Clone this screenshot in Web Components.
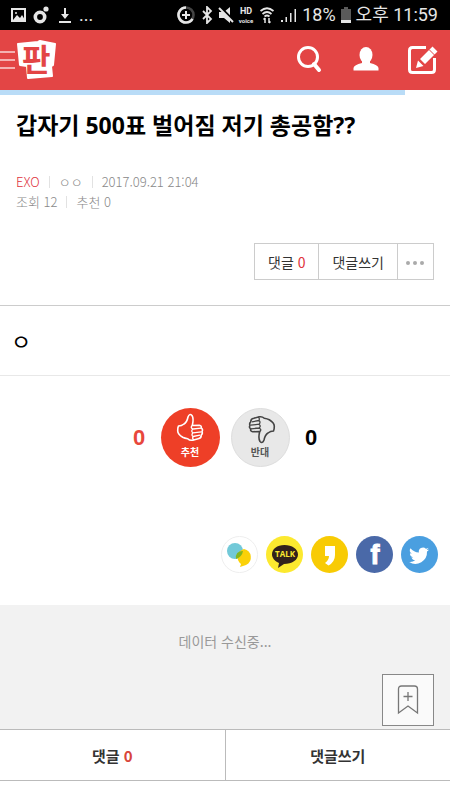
<!DOCTYPE html>
<html lang="ko">
<head>
<meta charset="utf-8">
<meta name="viewport" content="width=device-width, initial-scale=1">
<title>갑자기 500표 벌어짐 저기 총공함??</title>
<style>
    body {
        margin: 0;
        background: #fff;
        color: #333;
        font-family: "Noto Sans CJK KR", "Noto Sans", sans-serif;
        font-size: 14px;
    }
</style>
</head>
<body>
<status-bar>
    <span slot="battery">18%</span>
    <span slot="clock">오후 11:59</span>
</status-bar>
<app-header></app-header>
<load-progress></load-progress>
<main>
    <post-head>
        <span slot="title">갑자기 500표 벌어짐 저기 총공함??</span>
        <a slot="board" href="#exo">EXO</a>
        <span slot="writer">ㅇㅇ</span>
        <span slot="date">2017.09.21 21:04</span>
        <span slot="views">조회 12</span>
        <span slot="likes">추천 0</span>
    </post-head>
    <post-body>ㅇ</post-body>
    <vote-panel up="0" down="0"></vote-panel>
    <share-bar></share-bar>
    <loading-area>데이터 수신중...</loading-area>
</main>
<comment-bar count="0"></comment-bar>

<script>
const define = (name, html, setup) => {
    const template = document.createElement('template');
    template.innerHTML = html;

    customElements.define(name, class extends HTMLElement {
        constructor() {
            super();
            this.attachShadow({ mode: 'open' });
            this.shadowRoot.appendChild(template.content.cloneNode(true));
        }

        connectedCallback() {
            if (setup) setup(this, this.shadowRoot);
        }
    });
};

define('status-bar', `
    <style>
        :host {
            display: flex;
            align-items: center;
            justify-content: space-between;
            height: 30px;
            padding: 0 12px 0 11px;
            background: #000;
            color: #e6e6e6;
            font-family: Roboto, "Noto Sans CJK KR", sans-serif;
            font-size: 18px;
            line-height: 30px;
            white-space: nowrap;
        }

        .group {
            display: flex;
            align-items: center;
            gap: 7px;
        }

        .group.right {
            gap: 5px;
        }

        svg {
            display: block;
            flex: none;
        }

        .hd {
            display: flex;
            flex-direction: column;
            align-items: center;
            font-size: 9px;
            font-weight: 700;
            line-height: 11px;
        }

        .hd small {
            font-size: 6px;
            line-height: 8px;
        }
    </style>
    <div class="group">
        <svg width="15" height="18" viewBox="0 0 15 18"><rect x="1" y="3" width="13" height="12" fill="none" stroke="#e6e6e6" stroke-width="2"/><path d="M2 14l4-5 3 3 2-3 3 5z" fill="#e6e6e6"/><circle cx="5" cy="7" r="1" fill="#e6e6e6"/></svg>
        <svg width="16" height="20" viewBox="0 0 16 20"><circle cx="7" cy="12" r="4.7" fill="none" stroke="#e6e6e6" stroke-width="3.6"/><circle cx="13" cy="4" r="2.6" fill="#e6e6e6"/></svg>
        <svg width="16" height="18" viewBox="0 0 16 18" fill="#e6e6e6"><path d="M8 2h2v6h3l-4 5-4-5h3zM3 15h12v2H3z"/></svg>
        <span>...</span>
    </div>
    <div class="group right">
        <svg width="20" height="20" viewBox="0 0 20 20" fill="none" stroke-width="2.6"><circle cx="10" cy="10" r="7.500" stroke="#444"/><path d="M10 2.500a7.500 7.500 0 1 0 6.500 11.300" stroke="#e6e6e6"/><path d="M10 6v8M6 10h8" stroke="#e6e6e6" stroke-width="2"/></svg>
        <svg width="12" height="18" viewBox="0 0 12 18" fill="none" stroke="#e6e6e6" stroke-width="1.8"><path d="M2 5l8 8-4 4V1l4 4-8 8"/></svg>
        <svg width="16" height="18" viewBox="0 0 16 18"><path d="M1 6h5l6-5v16l-6-5H1z" fill="#e6e6e6"/><path d="M2 1l14 14" stroke="#000" stroke-width="2.500"/><path d="M1 2l14 14" stroke="#e6e6e6" stroke-width="2"/></svg>
        <span class="hd"><span>HD</span><small>voice</small></span>
        <svg width="18" height="18" viewBox="0 0 18 18" fill="none" stroke="#e6e6e6" stroke-width="1.7"><path d="M2.500 5q6.500-5.500 13 0M4.500 8q4.500-4 9 0M6.500 10.500q2.500-2 5 0"/><path d="M7 12v5M5.500 13.500L7 12M11 12v5M12.500 15.500L11 17" stroke-width="1.500"/></svg>
        <svg width="16" height="18" viewBox="0 0 16 18" fill="#e6e6e6"><path d="M0 14h2v2H0zM4.500 11h1.500v5H4.500zM9 7h1.500v9H9zM13.500 3H15v13h-1.500z"/></svg>
        <slot name="battery"></slot>
        <svg width="10" height="16" viewBox="0 0 10 16"><path d="M3 0h4v2h3v14H0V2h3z" fill="#5a5a5a"/><path d="M0 13h10v3H0z" fill="#e6e6e6"/></svg>
        <slot name="clock"></slot>
    </div>
`);

define('app-header', `
    <style>
        :host {
            display: block;
            background: #e34545;
        }

        header {
            display: flex;
            align-items: center;
            justify-content: space-between;
            height: 60px;
            padding-right: 12px;
        }

        .left {
            display: flex;
            align-items: center;
        }

        nav {
            display: flex;
            align-items: center;
            gap: 24px;
        }

        button {
            display: block;
            margin: 0;
            padding: 0;
            border: 0;
            background: none;
            cursor: pointer;
        }

        svg {
            display: block;
        }
    </style>
    <header>
        <div class="left">
            <button type="button" aria-label="메뉴">
                <svg width="16" height="20" viewBox="0 0 16 20" stroke="#f4b0b0" stroke-width="2"><path d="M0 2h15M0 10h15M0 18h15"/></svg>
            </button>
            <a href="#home" aria-label="판">
                <svg width="42" height="56" viewBox="0 -8 42 56">
                    <path d="M2 4l20-2 2-1 15 3-2 21-2 1 1 10-24 2-1-12-7-1z" fill="#fff" stroke="#fff" stroke-width="2" stroke-linejoin="round"/>
                    <text x="6" y="31" font-family="Noto Sans CJK KR, sans-serif" font-size="31" font-weight="700" fill="#e34545">판</text>
                </svg>
            </a>
        </div>
        <nav>
            <button type="button" aria-label="검색">
                <svg width="32" height="32" viewBox="0 0 32 32" fill="none" stroke="#fff"><circle cx="14" cy="13" r="9.500" stroke-width="3"/><path d="M20 20l5 6" stroke-width="4" stroke-linecap="round"/></svg>
            </button>
            <button type="button" aria-label="내 정보">
                <svg width="32" height="32" viewBox="0 0 32 32" fill="#fff"><ellipse cx="16" cy="11" rx="6.500" ry="8"/><path d="M12 16h8v3q8 2 8.500 5v2.500h-25V24q.5-3 8.500-5z"/></svg>
            </button>
            <button type="button" aria-label="글쓰기">
                <svg width="32" height="32" viewBox="0 0 32 32" fill="none"><path d="M20 3.500H6.500q-3 0-3 3v19q0 3 3 3h19q3 0 3-3V14" stroke="#fff" stroke-width="3"/><path d="M14 15L26.500 2.500l5 5L19 20zM12 16.500l5.500 5.500-7.500 2z" fill="#fff"/><path d="M23 5.500l5.500 5.500" stroke="#e34545"/></svg>
            </button>
        </nav>
    </header>
`);

define('load-progress', `
    <style>
        :host {
            display: block;
            height: 5px;
        }

        .bar {
            width: 90%;
            height: 100%;
            background: #b9dcf7;
        }
    </style>
    <div class="bar" role="progressbar" aria-label="로딩" aria-valuenow="90"></div>
`);

define('post-head', `
    <style>
        :host {
            display: block;
            padding: 15px 16px 25px;
            border-bottom: 1px solid #ccc;
        }

        h1 {
            margin: 0 0 32px;
            color: #000;
            font-family: "Noto Sans", "Noto Sans CJK KR", sans-serif;
            font-size: 23px;
            font-weight: 700;
            line-height: 30px;
        }

        .meta {
            display: flex;
            color: #888;
            font-size: 13px;
            font-weight: 300;
            line-height: 20px;
        }

        .meta > span + span {
            display: flex;
            align-items: center;
        }

        .meta > span + span::before {
            content: "";
            width: 1px;
            height: 12px;
            margin: 0 9px;
            background: #e2e2e2;
        }

        ::slotted(a) {
            color: #e0323c;
            text-decoration: none;
        }

        .actions {
            display: flex;
            width: fit-content;
            margin: 31px 0 0 auto;
            border: 1px solid #ccc;
        }

        button {
            height: 35px;
            margin: 0;
            padding: 0 13px;
            border: 0;
            background: #fff;
            color: #333;
            font: inherit;
            cursor: pointer;
        }

        button + button {
            border-left: 1px solid #ccc;
        }

        .more {
            padding: 0 8px;
        }

        em {
            color: #e0323c;
            font-style: normal;
        }

        svg {
            display: block;
        }
    </style>
    <h1><slot name="title"></slot></h1>
    <div class="meta">
        <span><slot name="board"></slot></span>
        <span><slot name="writer"></slot></span>
        <span><slot name="date"></slot></span>
    </div>
    <div class="meta">
        <span><slot name="views"></slot></span>
        <span><slot name="likes"></slot></span>
    </div>
    <div class="actions">
        <button type="button">댓글 <em>0</em></button>
        <button type="button">댓글쓰기</button>
        <button type="button" class="more" aria-label="더보기">
            <svg width="19" height="6" viewBox="0 0 19 6" fill="#aaa"><circle cx="2" cy="4" r="2"/><circle cx="9" cy="4" r="2"/><circle cx="16" cy="4" r="2"/></svg>
        </button>
    </div>
`);

define('post-body', `
    <style>
        :host {
            display: block;
            padding: 20px 11px;
            border-bottom: 1px solid #e8e8e8;
            color: #000;
            font-size: 22px;
            line-height: 29px;
        }
    </style>
    <slot></slot>
`);

// both hands share one outline, the second is turned upside down
const hand = `
    <path d="M17.500 18q3 0 5.500-2 3-2 4-7 1.500-4 4-1.500 2 3 .3 10l7-.3q2.500.3 2 3 2 1 .7 3.500 1 2-.8 3.500.2 3-3 3.500l-5.500 1.500q-3 .5-5-1.500-3-.5-5-1.500-5-3-5-6.500 0-3.500.8-4.700z"/>
    <path d="M32 21l8-.8M32 24.800l8.500-1M32 28.500l7-1.300M31.300 17.500q-2.500 1.800.7 3.500-2.500 2 0 3.800-2 2 0 3.700-1 2.500 1 3.500" stroke-width="1.300"/>
`;

define('vote-panel', `
    <style>
        :host {
            display: flex;
            align-items: center;
            justify-content: center;
            gap: 11px;
            padding: 32px 0;
        }

        output {
            width: 21px;
            color: #000;
            font-family: "Liberation Sans", Arial, sans-serif;
            font-size: 22px;
            font-weight: 700;
            text-align: center;
        }

        output.up {
            color: #e8473c;
        }

        button {
            display: flex;
            flex-direction: column;
            align-items: center;
            width: 59px;
            height: 59px;
            margin: 0;
            padding: 0;
            border: 0;
            border-radius: 50%;
            background: #ee3f27;
            color: #fff;
            font: inherit;
            font-size: 10px;
            font-weight: 700;
            line-height: 14px;
            cursor: pointer;
        }

        button.down {
            border: 1px solid #ddd;
            box-sizing: border-box;
            background: #e8e8e8;
            color: #555;
        }

        svg {
            display: block;
            flex: none;
            fill: none;
            stroke-linejoin: round;
        }
    </style>
    <output class="up" aria-label="추천수"></output>
    <button type="button"><svg width="59" height="37" viewBox="0 0 59 37" stroke="#fff" stroke-width="1.600">${hand}</svg>추천</button>
    <button type="button" class="down"><svg width="59" height="36" viewBox="0 0 59 36" stroke="#444" stroke-width="1.600"><g transform="rotate(180 30 20)">${hand}</g></svg>반대</button>
    <output class="down" aria-label="반대수"></output>
`, (host, root) => {
    root.querySelector('output.up').textContent = host.getAttribute('up');
    root.querySelector('output.down').textContent = host.getAttribute('down');
});

define('share-bar', `
    <style>
        :host {
            display: flex;
            justify-content: flex-end;
            gap: 8px;
            padding: 37px 12px 32px;
        }

        a, svg {
            display: block;
        }
    </style>
    <a href="#share" aria-label="공유">
        <svg width="37" height="37" viewBox="0 0 37 37"><circle cx="18.500" cy="18.500" r="18" fill="#fff" stroke="#eee"/><circle cx="14" cy="15" r="8" fill="#72c9d8"/><path d="M23 13a8.500 8.500 0 0 1 2 16l-6 2 1-3a8.500 8.500 0 0 1 3-15z" fill="#fbd108"/><path d="M22 15q-1 6-7 8-1-8 7-8z" fill="#83b51f"/></svg>
    </a>
    <a href="#kakaotalk" aria-label="카카오톡">
        <svg width="37" height="37" viewBox="0 0 37 37"><circle cx="18.500" cy="18.500" r="18.500" fill="#fce92f"/><path d="M18.500 9C26 9 32 13 32 18.500S26 28 18 28l-6 4 1-5c-4-1.500-7-5-7-8.500C6 13 11 9 18.500 9z" fill="#32211c"/><text x="19" y="21" text-anchor="middle" font-family="Open Sans, sans-serif" font-size="8" font-weight="700" fill="#fce92f">TALK</text></svg>
    </a>
    <a href="#kakaostory" aria-label="카카오스토리">
        <svg width="37" height="37" viewBox="0 0 37 37"><circle cx="18.500" cy="18.500" r="18.500" fill="#f8cb04"/><path d="M14 10h10v9q0 7-6.500 10.500L14 27q4-3 4-7h-4z" fill="#fff"/></svg>
    </a>
    <a href="#facebook" aria-label="페이스북">
        <svg width="37" height="37" viewBox="0 0 37 37"><circle cx="18.500" cy="18.500" r="18.500" fill="#4a69a8"/><text x="19" y="28" text-anchor="middle" font-family="Liberation Sans, sans-serif" font-size="27" font-weight="700" fill="#fff" stroke="#fff">f</text></svg>
    </a>
    <a href="#twitter" aria-label="트위터">
        <svg width="37" height="37" viewBox="0 0 37 37"><circle cx="18.500" cy="18.500" r="18.500" fill="#4a9fe0"/><path d="M23 5.100a9 9 0 0 1-2.700.7 4.700 4.700 0 0 0 2.100-2.600 9.400 9.400 0 0 1-3 1.200 4.700 4.700 0 0 0-8 4.300A13.400 13.400 0 0 1 1.700 3.700a4.700 4.700 0 0 0 1.500 6.300 4.700 4.700 0 0 1-2.100-.6 4.700 4.700 0 0 0 3.800 4.700 4.700 4.700 0 0 1-2.100.1 4.700 4.700 0 0 0 4.400 3.300 9.500 9.500 0 0 1-7 2A13.400 13.400 0 0 0 20.700 7.500 9.600 9.600 0 0 0 23 5.100z" transform="translate(8 9) scale(.87)" fill="#fff"/></svg>
    </a>
`);

define('loading-area', `
    <style>
        :host {
            display: block;
            position: relative;
            padding: 26px 0 78px;
            background: #f2f2f2;
            color: #999;
            line-height: 20px;
            text-align: center;
        }

        /* floats over the list while it loads */
        button {
            position: absolute;
            right: 16px;
            bottom: 3px;
            padding: 9px;
            border: 1px solid #888;
            background: #fafafa;
            cursor: pointer;
        }

        svg {
            display: block;
        }
    </style>
    <slot></slot>
    <button type="button" aria-label="스크랩">
        <svg width="32" height="32" viewBox="0 0 32 32" fill="none" stroke="#777" stroke-width="1.300"><path d="M6.500 29V5q0-3 3-3h13q3 0 3 3v24L16 22z"/><path d="M16 8v9M11.500 12.500h9"/></svg>
    </button>
`);

define('comment-bar', `
    <style>
        :host {
            display: flex;
            border-top: 1px solid #bbb;
            border-bottom: 1px solid #bbb;
        }

        button {
            flex: 1;
            height: 50px;
            margin: 0;
            padding: 0;
            border: 0;
            background: #fff;
            color: #333;
            font: inherit;
            font-size: 15px;
            font-weight: 700;
            cursor: pointer;
        }

        button + button {
            border-left: 1px solid #bbb;
        }

        em {
            color: #d8453a;
            font-style: normal;
        }
    </style>
    <button type="button">댓글 <em></em></button>
    <button type="button">댓글쓰기</button>
`, (host, root) => {
    root.querySelector('em').textContent = host.getAttribute('count');
});
</script>
</body>
</html>
